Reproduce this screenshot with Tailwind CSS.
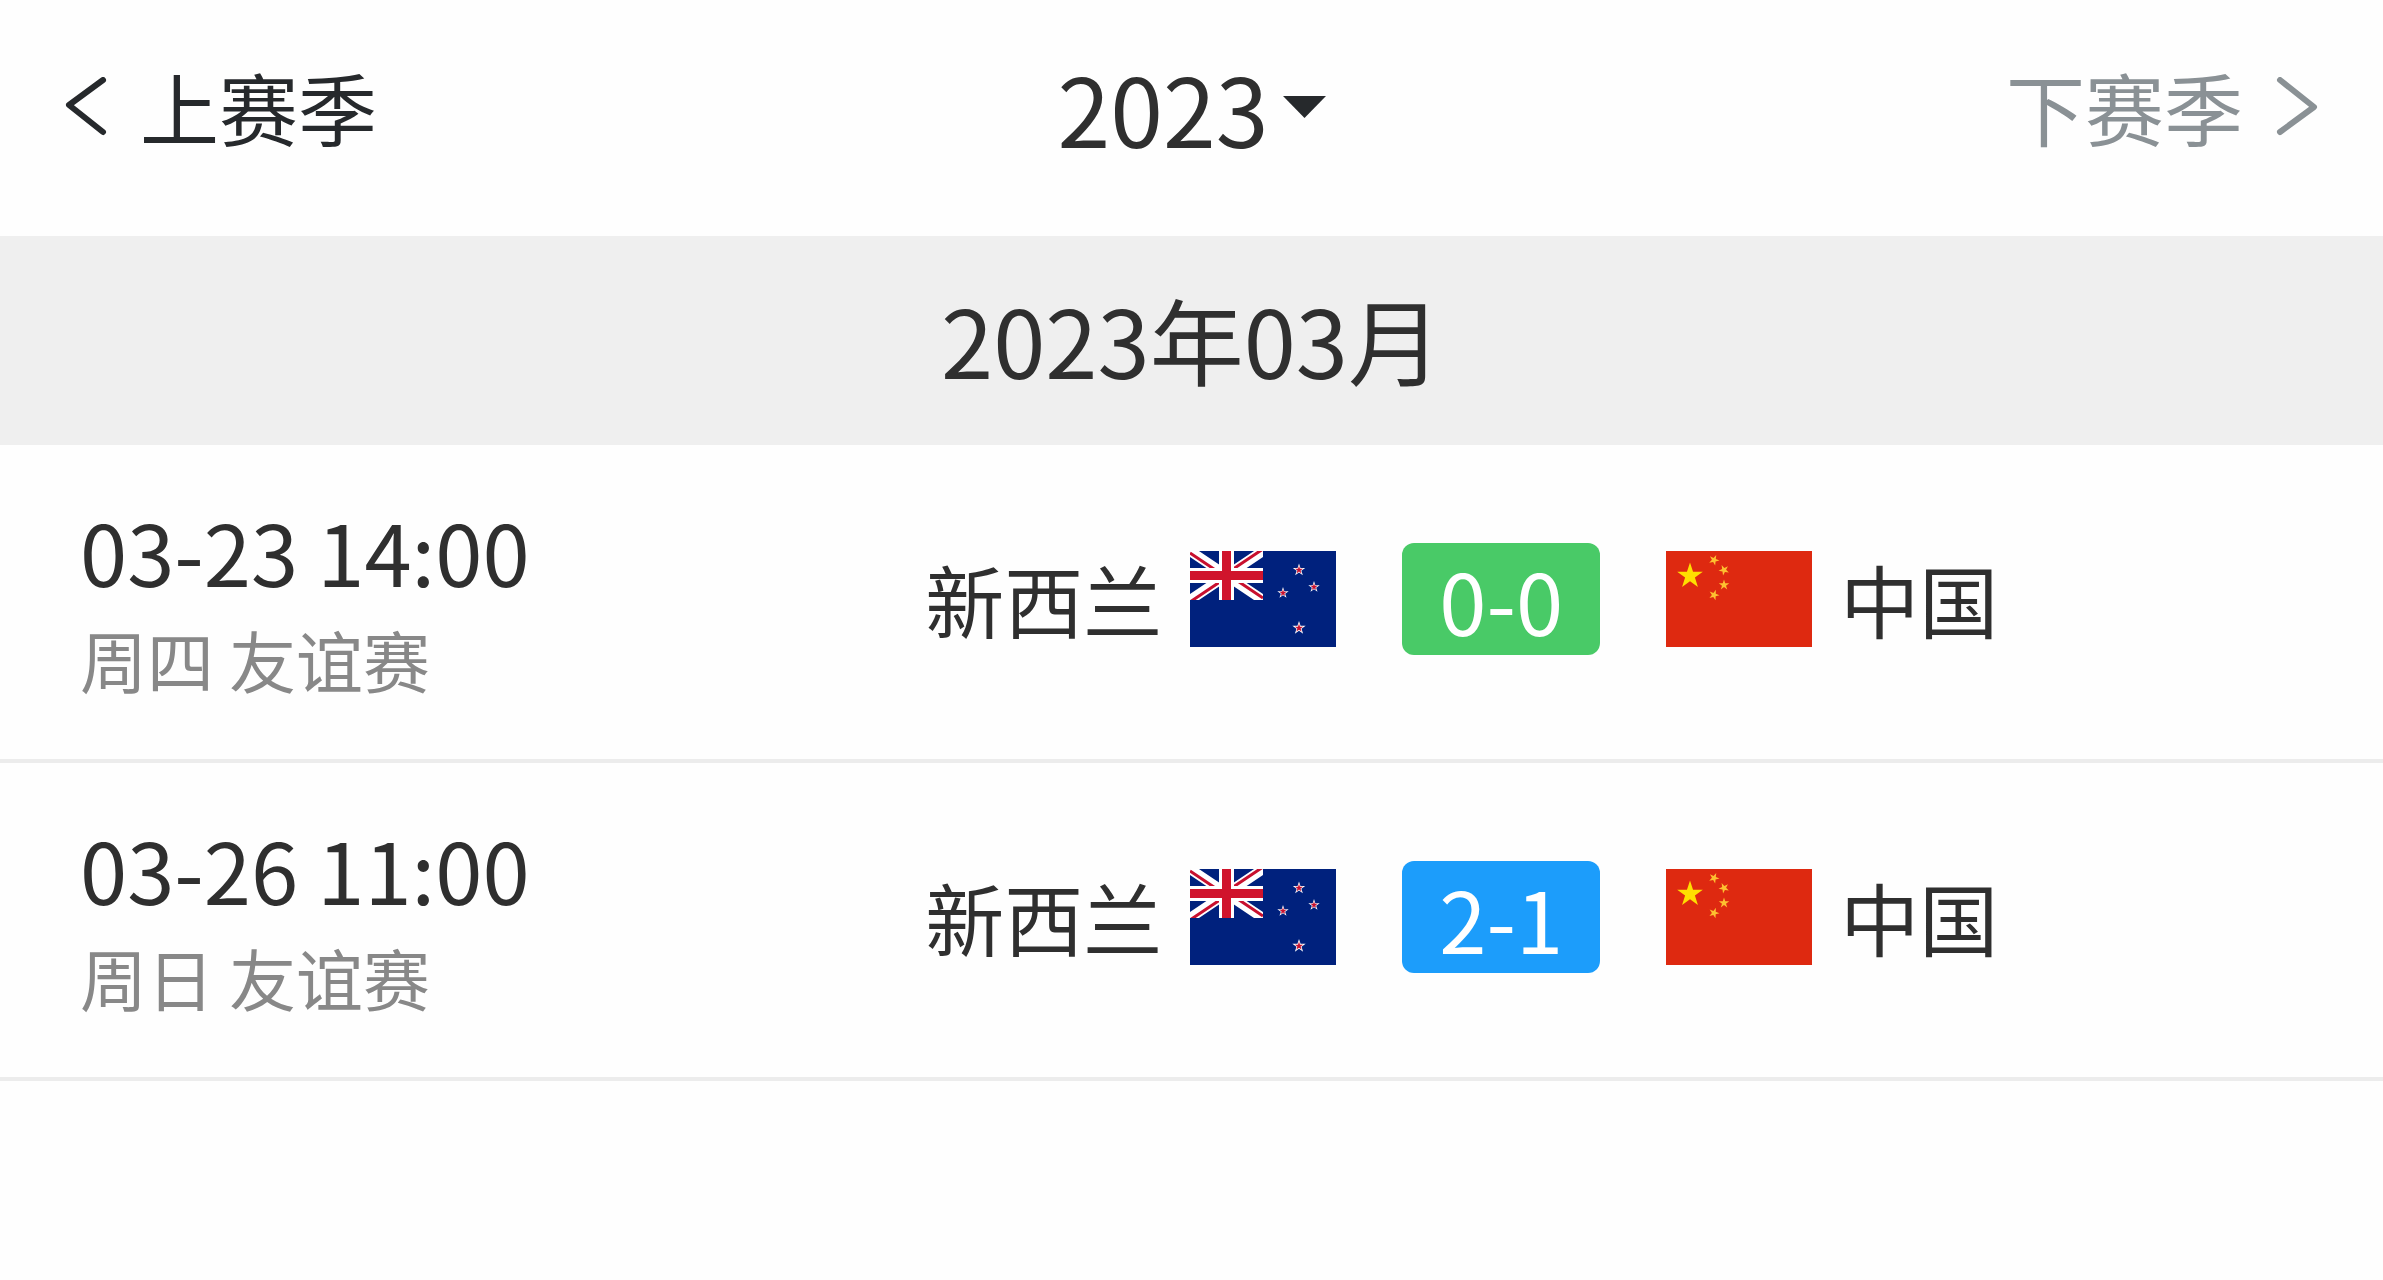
<!DOCTYPE html>
<html lang="zh-CN">
  <head>
    <meta charset="UTF-8" />
    <meta name="viewport" content="width=device-width, initial-scale=1.0" />
    <title>赛程</title>
    <script src="https://cdn.jsdelivr.net/npm/@tailwindcss/browser@4"></script>
  </head>
  <body class="min-h-screen bg-[#fefefe] font-['Noto_Sans_CJK_SC',sans-serif] text-[#2f2f2f]">
    <!-- shared flag drawings -->
    <svg class="hidden" aria-hidden="true">
      <defs>
        <polygon
          id="star"
          points="0,-1 .225,-.309 .951,-.309 .363,.118 .588,.809 0,.382 -.588,.809 -.363,.118 -.951,-.309 -.225,-.309"
        />
        <symbol id="flag-nz" viewBox="0 0 146 96">
          <rect width="146" height="96" fill="#00217d" />
          <svg width="73" height="49" viewBox="0 0 73 49" overflow="hidden">
            <path d="M0 0 73 49M73 0 0 49" stroke="#fff" stroke-width="10" />
            <path
              d="M0 2 36.5 26.5M36.5 22.5 73 47M73 -2 36.5 22.5M36.5 26.5 0 51"
              stroke="#c8102e"
              stroke-width="3"
            />
            <path d="M36.5 0V49M0 24.5H73" stroke="#fff" stroke-width="15" />
            <path d="M36.5 0V49M0 24.5H73" stroke="#d0142c" stroke-width="9" />
          </svg>
          <g fill="#fff">
            <use href="#star" transform="translate(109 19) scale(6.5)" />
            <use href="#star" transform="translate(124 36) scale(6)" />
            <use href="#star" transform="translate(93 42) scale(6)" />
            <use href="#star" transform="translate(109 77) scale(7)" />
          </g>
          <g fill="#c8102e">
            <use href="#star" transform="translate(109 19) scale(4.2)" />
            <use href="#star" transform="translate(124 36) scale(3.8)" />
            <use href="#star" transform="translate(93 42) scale(3.8)" />
            <use href="#star" transform="translate(109 77) scale(4.4)" />
          </g>
        </symbol>
        <symbol id="flag-cn" viewBox="0 0 146 96">
          <rect width="146" height="96" fill="#de2910" />
          <g fill="#ffde00">
            <use href="#star" transform="translate(24 25) scale(13.5)" />
            <g fill="#fdc030">
              <use href="#star" transform="translate(48 9) rotate(24) scale(5.5)" />
              <use href="#star" transform="translate(58 19) rotate(46) scale(5.5)" />
              <use href="#star" transform="translate(58 34) scale(5.5)" />
              <use href="#star" transform="translate(48 44) rotate(20) scale(5.5)" />
            </g>
          </g>
        </symbol>
      </defs>
    </svg>

    <!-- season switch -->
    <header class="grid grid-cols-[1fr_auto_1fr] items-center px-16 pt-[45px] pb-[67px] leading-[124px]">
      <button type="button" class="flex items-center gap-8 justify-self-start text-[79px] text-[#26292c]">
        <svg class="h-[60px] w-11" viewBox="0 0 44 60" fill="none" stroke="currentColor" stroke-width="6" stroke-linecap="round" stroke-linejoin="round" aria-hidden="true">
          <path d="M39 3 5 28 39 55" />
        </svg>
        上赛季
      </button>
      <div class="flex items-center gap-3.5">
        <select aria-label="赛季" class="appearance-none text-[95px]">
          <option>2023</option>
        </select>
        <svg class="h-[22px] w-[43px]" viewBox="0 0 43 22" fill="#26292c" aria-hidden="true">
          <path d="M0 0H43L21.5 22Z" />
        </svg>
      </div>
      <button type="button" class="flex items-center gap-8 justify-self-end text-[79px] text-[#8a9195]">
        下赛季
        <svg class="h-[60px] w-11" viewBox="0 0 44 60" fill="none" stroke="currentColor" stroke-width="6" stroke-linecap="round" stroke-linejoin="round" aria-hidden="true">
          <path d="M5 3 39 30 5 55" />
        </svg>
      </button>
    </header>

    <main>
      <h2 class="bg-[#efefef] pt-[38px] pb-[42px] text-center text-[94px] leading-[129px]">2023年03月</h2>

      <ul>
        <li class="flex items-center border-b-4 border-[#ececec] pt-13 pb-[58px]">
          <div class="w-[26%] pl-20 whitespace-nowrap">
            <p class="text-[85px] leading-[106px]">03-23 14:00</p>
            <p class="mt-3.5 text-[67px] leading-[84px] text-[#888]">周四 友谊赛</p>
          </div>
          <div class="grid flex-1 grid-cols-[1fr_auto_1fr] items-center gap-[66px] text-[79px] leading-[112px]">
            <div class="flex items-center justify-end gap-7">
              <span>新西兰</span>
              <svg class="h-24 w-[146px]" role="img" aria-label="新西兰国旗"><use href="#flag-nz" /></svg>
            </div>
            <span class="w-[198px] rounded-xl bg-[#49ca67] text-center text-[85px] text-white">0-0</span>
            <div class="flex items-center gap-7">
              <svg class="h-24 w-[146px]" role="img" aria-label="中国国旗"><use href="#flag-cn" /></svg>
              <span>中国</span>
            </div>
          </div>
        </li>
        <li class="flex items-center border-b-4 border-[#ececec] pt-13 pb-[58px]">
          <div class="w-[26%] pl-20 whitespace-nowrap">
            <p class="text-[85px] leading-[106px]">03-26 11:00</p>
            <p class="mt-3.5 text-[67px] leading-[84px] text-[#888]">周日 友谊赛</p>
          </div>
          <div class="grid flex-1 grid-cols-[1fr_auto_1fr] items-center gap-[66px] text-[79px] leading-[112px]">
            <div class="flex items-center justify-end gap-7">
              <span>新西兰</span>
              <svg class="h-24 w-[146px]" role="img" aria-label="新西兰国旗"><use href="#flag-nz" /></svg>
            </div>
            <span class="w-[198px] rounded-xl bg-[#1c9dfb] text-center text-[85px] text-white">2-1</span>
            <div class="flex items-center gap-7">
              <svg class="h-24 w-[146px]" role="img" aria-label="中国国旗"><use href="#flag-cn" /></svg>
              <span>中国</span>
            </div>
          </div>
        </li>
      </ul>
    </main>
  </body>
</html>
